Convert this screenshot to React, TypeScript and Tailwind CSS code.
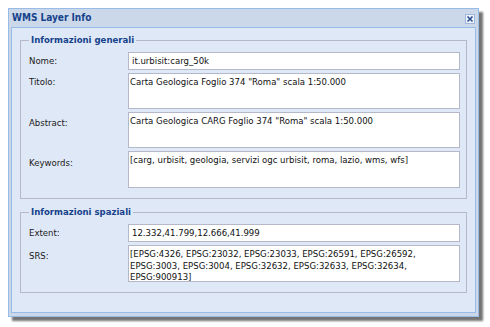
import React from 'react';

const FONT = "font-['DejaVu_Sans_Condensed','DejaVu_Sans',sans-serif] font-stretch-condensed";

const Field: React.FC<{ label: string; value: string; h: string; pt: string; multi?: boolean }> = ({ label, value, h, pt, multi }) => (
  <div className="flex">
    <div className={`w-[99px] shrink-0 text-[9.5px] leading-[12px] text-[#1a1a1a] ${pt}`}>{label}</div>
    <div
      className={`flex-1 bg-white border border-[#b5b8c8] text-[9.5px] text-[#111] ${h} ${
        multi ? 'px-[1px] pt-[2px] leading-[11.5px]' : 'px-[3px] flex items-center leading-none'
      }`}
    >
      {value}
    </div>
  </div>
);

const Section: React.FC<{ title: string; children: React.ReactNode; className?: string }> = ({ title, children, className }) => (
  <fieldset className={`border border-[#b5b8c8] pl-[8px] pr-[6px] ${className || ''}`}>
    <legend className="px-[2px] text-[9.5px] font-bold text-[#15428b] leading-[12px]">{title}</legend>
    <div className="flex flex-col gap-[3px]">{children}</div>
  </fieldset>
);

export default function App() {
  return (
    <div className={`w-[490px] h-[327px] bg-white pt-[8px] pl-[8px] ${FONT}`}>
      <div className="w-[471px] h-[309px] bg-[#cbd8ea] border border-[#99bbe8] shadow-[4px_4px_2px_rgba(0,0,0,0.55)] flex flex-col">
        {/* header */}
        <div className="h-[17px] flex items-center justify-between pl-[3px] pr-[2px]">
          <span className="text-[10px] font-bold text-[#15428b] leading-none pt-[1px]">WMS Layer Info</span>
          <button className="w-[10px] h-[10px] mt-[2px] mr-[1px] bg-[#eef3fb] border border-[#9fb7dc] flex items-center justify-center">
            <svg width="8" height="8" viewBox="0 0 8 8">
              <path d="M1.5 1.5 L6.5 6.5 M6.5 1.5 L1.5 6.5" stroke="#2c4f8c" strokeWidth="1.6" />
            </svg>
          </button>
        </div>
        {/* body */}
        <div className="flex-1 px-[2px] pb-[3px] pt-[1px]">
          <div className="h-full bg-[#dfe8f6] border border-[#99bbe8] px-[8px] pt-[6px]">
            <Section title="Informazioni generali" className="pb-[10px]">
              <div className="h-[3px]" />
              <Field label="Nome:" value="it.urbisit:carg_50k" h="h-[18px]" pt="pt-[3px]" />
              <Field label="Titolo:" value={'Carta Geologica Foglio 374 "Roma" scala 1:50.000'} h="h-[36px]" pt="pt-[3px]" multi />
              <Field label="Abstract:" value={'Carta Geologica CARG Foglio 374 "Roma" scala 1:50.000'} h="h-[36px]" pt="pt-[5px]" multi />
              <Field
                label="Keywords:"
                value="[carg, urbisit, geologia, servizi ogc urbisit, roma, lazio, wms, wfs]"
                h="h-[37px]"
                pt="pt-[6px]"
                multi
              />
            </Section>
            <Section title="Informazioni spaziali" className="mt-[7px] pb-[10px]">
              <div className="h-[3px]" />
              <Field label="Extent:" value="12.332,41.799,12.666,41.999" h="h-[18px]" pt="pt-[3px]" />
              <Field
                label="SRS:"
                value="[EPSG:4326, EPSG:23032, EPSG:23033, EPSG:26591, EPSG:26592, EPSG:3003, EPSG:3004, EPSG:32632, EPSG:32633, EPSG:32634, EPSG:900913]"
                h="h-[37px]"
                pt="pt-[5px]"
                multi
              />
            </Section>
          </div>
        </div>
      </div>
    </div>
  );
}
